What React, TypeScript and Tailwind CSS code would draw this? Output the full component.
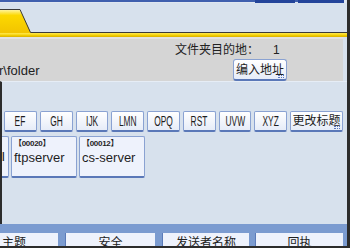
import type { ReactNode } from "react";

const cjk = "font-['Liberation_Sans','Noto_Sans_CJK_SC',sans-serif]";

const LETTERS = ["EF", "GH", "IJK", "LMN", "OPQ", "RST", "UVW", "XYZ"];

const DESTS = [
  { no: "00020", name: "ftpserver" },
  { no: "00012", name: "cs-server" },
];

const BOTTOM_TABS = [
  { label: "主题", w: "w-[89px]", ml: "ml-[-31px]" },
  { label: "安全", w: "w-[90px]", ml: "ml-[7px]" },
  { label: "发送者名称", w: "w-[87px]", ml: "ml-[7px]" },
  { label: "回执", w: "w-[88px]", ml: "ml-[6px]" },
];

function MoreDots() {
  return (
    <span className="absolute bottom-[1px] right-[2px] h-[3px] w-[6px] border-y border-dotted border-[#5a78c0]" />
  );
}

function KeyButton({ children, wide, more }: { children: ReactNode; wide?: boolean; more?: boolean }) {
  return (
    <div
      className={`relative flex h-[21px] shrink-0 items-center justify-center rounded-[2px] border border-b-2 border-[#8aa2d2] border-b-[#5a78b8] bg-gradient-to-b from-white to-[#e6ecf8] text-[#1e1e1e] ${
        wide ? "w-[53px]" : "w-[32.75px]"
      }`}
    >
      {children}
      {more && <MoreDots />}
    </div>
  );
}

function Tab() {
  return (
    <div className="relative ml-[-29px] h-full w-[60px] shrink-0">
      <svg className="absolute inset-0" width="60" height="30" viewBox="0 0 60 30">
        <defs>
          <linearGradient id="tabfill" x1="0" y1="0" x2="0" y2="1">
            <stop offset="0" stopColor="#fff6a8" />
            <stop offset="0.25" stopColor="#fcd800" />
            <stop offset="1" stopColor="#f2c400" />
          </linearGradient>
        </defs>
        <path d="M0 6.5 L49 6.5 L60 30 L0 30 Z" fill="url(#tabfill)" />
        <path d="M0 6.5 L49 6.5 L59.5 29.5 L60 29.5" fill="none" stroke="#3a3a3a" strokeWidth="1" />
      </svg>
      <div className="relative flex h-full items-end justify-end pb-[5px] pr-[25px] text-[12px] leading-[14px] text-[#222]">
        文件夹
      </div>
    </div>
  );
}

export default function App() {
  return (
    <div className={`flex h-[248px] w-[350px] overflow-hidden bg-[#d7e1ed] ${cjk}`}>
      <div className="flex min-w-0 flex-1 flex-col">
        {/* top strip */}
        <div className="flex h-[3px] shrink-0 items-start bg-[#dfe6f0]">
          <div className="h-[2px] flex-1 bg-[#3f5fae]" />
          <div className="h-[3px] w-[40px] bg-[#23449a]" />
          <div className="h-[2px] w-[3px] bg-[#3f5fae]" />
          <div className="h-[3px] w-[46px] bg-[#23449a]" />
          <div className="w-[3px]" />
        </div>

        {/* tab row */}
        <div className="flex h-[30px] shrink-0 items-end">
          <Tab />
          <div className="h-full flex-1 border-b border-[#3a3a3a]" />
        </div>
        <div className="h-[4px] shrink-0 bg-gradient-to-b from-[#ffe94a] via-[#f6d400] to-[#d9b000]" />

        {/* destination panel */}
        <div className="mr-[4px] flex h-[44px] shrink-0 flex-col border-t-[2px] border-[#e2e2e2] bg-[#d5d5d5] text-[12px] text-[#222]">
          <div className="ml-[175px] mt-[4px] flex h-[14px] items-center leading-[14px]">
            <span>文件夹目的地：</span>
            <span className="ml-[14px]">1</span>
          </div>
          <div className="mt-[2px] flex items-center">
            <span className="ml-[-1px] mt-[2px] text-[13px] leading-[14px]">r\folder</span>
            <div className="relative ml-auto mr-[56px] flex h-[22px] w-[54px] items-center justify-center rounded-[3px] border border-b-2 border-[#8aa2d2] border-b-[#5a78b8] bg-gradient-to-b from-white to-[#e6ecf8]">
              编入地址
              <MoreDots />
            </div>
          </div>
        </div>

        {/* list area */}
        <div className="flex min-h-0 flex-1 flex-col overflow-hidden border-l-2 border-t border-[#2c2c2c] border-t-[#e6edf6] pt-[29px]">
          <div className="flex gap-[3px] pl-[2px]">
            {LETTERS.map((l) => (
              <KeyButton key={l}>
                <span className="inline-block scale-x-[0.6] text-[14px] leading-[14px]">{l}</span>
              </KeyButton>
            ))}
            <KeyButton wide more>
              <span className="text-[12px] leading-[14px]">更改标题</span>
            </KeyButton>
          </div>

          <div className="mt-[4px] flex gap-[2px]">
            <div className="ml-[-59px] flex h-[42px] w-[66px] shrink-0 items-end justify-end rounded-[2px] border border-b-2 border-[#8aa2d2] border-b-[#5a78b8] bg-[#eef2fc] pb-[12px] pr-[3px] text-[13px] leading-[14px] text-[#1e1e1e]">
              I
            </div>
            {DESTS.map((d) => (
              <div
                key={d.no}
                className="flex h-[42px] w-[66px] shrink-0 flex-col rounded-[2px] border border-b-2 border-[#8aa2d2] border-b-[#5a78b8] bg-[#eef2fc] pl-[2px] text-[#1e1e1e]"
              >
                <span className="mt-[2px] text-[8px] font-bold leading-[9px] tracking-[-0.3px]">
                  【{d.no}】
                </span>
                <span className="mt-[2px] text-[13px] leading-[15px]">{d.name}</span>
              </div>
            ))}
          </div>
        </div>

        {/* bottom tabs */}
        <div className="h-[9px] shrink-0 bg-[#7b9bd0]" />
        <div className="flex h-[13px] shrink-0 overflow-hidden bg-[#7b9bd0]">
          {BOTTOM_TABS.map((t) => (
            <div
              key={t.label}
              className={`${t.w} ${t.ml} flex h-full shrink-0 justify-center border-l border-[#5a7ab8] bg-[#eef2fc] pt-[3px] text-[12px] leading-[14px] text-[#222]`}
            >
              {t.label}
            </div>
          ))}
        </div>
        <div className="h-[2px] shrink-0 bg-[#2c2c2c]" />
      </div>
      <div className="w-[3px] shrink-0 bg-[#2c2c2c]" />
    </div>
  );
}
